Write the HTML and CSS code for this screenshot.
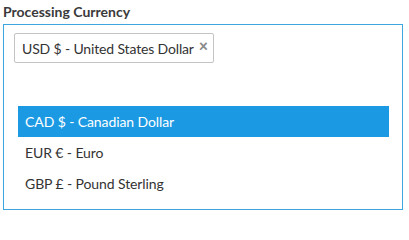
FILE: index.html
```html
<!DOCTYPE html>
<html>
<head>
<meta charset="utf-8">
<link rel="stylesheet" href="styles.css">
</head>
<body>
<div class="field">
  <div class="label">Processing Currency</div>
  <div class="box">
    <div class="selection">
      <span class="tag">USD $ - United States Dollar<span class="remove">×</span></span>
    </div>
    <ul class="results">
      <li class="option active">CAD $ - Canadian Dollar</li>
      <li class="option">EUR € - Euro</li>
      <li class="option">GBP £ - Pound Sterling</li>
    </ul>
  </div>
</div>
</body>
</html>
```
FILE: styles.css
```css
html, body {
  margin: 0;
  padding: 0;
  background: #fff;
}
body {
  font-family: Lato, "Liberation Sans", sans-serif;
  color: #333;
}
.field {
  padding: 2px 0 0 3px;
  width: 400px;
}
.label {
  font-weight: bold;
  font-size: 14px;
  line-height: 20px;
  height: 22px;
  color: #3a3a3a;
}
.box {
  border: 1px solid #3ea6df;
  height: 184px;
  box-shadow: 0 3px 2px -1px #d8dde0;
}
.selection {
  padding: 8px 0 0 10px;
  height: 73px;
}
.tag {
  display: inline-flex;
  align-items: center;
  height: 28px;
  border: 1px solid #c4c4c4;
  border-radius: 2px;
  padding: 0 5px 0 7px;
  font-size: 14px;
  letter-spacing: -0.15px;
  color: #333;
}
.remove {
  color: #8a8a8a;
  font-size: 16px;
  font-weight: 900;
  margin-left: 5px;
  position: relative;
  top: -3px;
}
.results {
  list-style: none;
  margin: 0 13px 0 14px;
  padding: 0;
}
.option {
  height: 31px;
  line-height: 31px;
  padding-left: 7px;
  font-size: 14px;
  letter-spacing: -0.1px;
  color: #333;
}
.option.active {
  background: #1b9ae3;
  color: #fff;
}
```
